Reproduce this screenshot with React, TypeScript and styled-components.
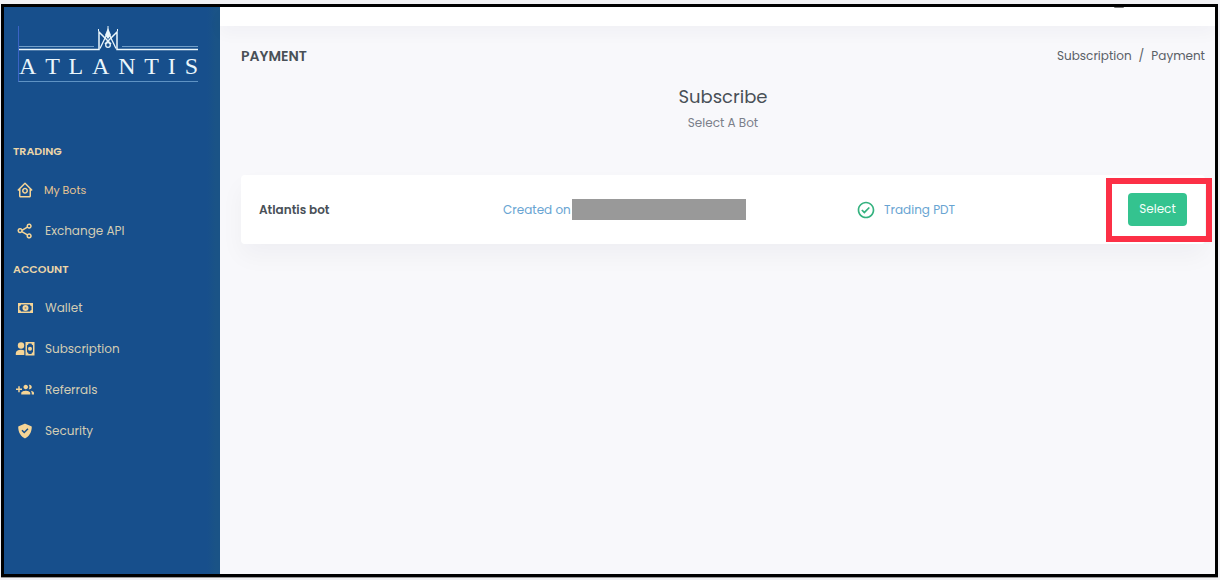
import React from 'react';
import styled, { createGlobalStyle } from 'styled-components';
import { BiCheckCircle, BiHomeCircle, BiShareAlt, BiSolidCheckShield } from 'react-icons/bi';

const GlobalStyle = createGlobalStyle`
  * { box-sizing: border-box; }
  body {
    margin: 0;
    background: #f1f1f4;
    font-family: Poppins, Inter, "Open Sans", sans-serif;
    font-size: 12px;
    line-height: 20px;
    color: #495057;
  }
  h1, h2, h3, p, ul, ol { margin: 0; padding: 0; font-weight: 400; }
  ul, ol { list-style: none; }
  a { color: inherit; text-decoration: none; }
`;

const Page = styled.div`
  min-height: 100vh;
  padding: 4px 2px 3px 1px;
  display: flex;
`;

const Frame = styled.div`
  flex: 1;
  display: flex;
  border: 3px solid #000;
  background: #f8f8fb;
  box-shadow: 0 1px 0 #999;
`;

const Sidebar = styled.aside`
  flex: 0 0 216px;
  background: linear-gradient(90deg, #174f8c 94%, #1a5386 98%);
`;

const Brand = styled.a`
  display: block;
  height: 126px;
  padding: 19px 22px 0 14px;
  color: #eaf6fb;
`;

const BrandMark = styled.svg`
  display: block;
  width: 180px;
  height: 26px;
`;

const Wordmark = styled.span`
  display: flex;
  justify-content: space-between;
  width: 180px;
  height: 30px;
  border-left: 1px solid #3a63c4;
  border-bottom: 1px solid #5f93c4;
  font: 24px/28px "Liberation Serif", serif;
`;

const MenuTitle = styled.h3`
  height: 36px;
  padding-left: 9px;
  font-size: 11px;
  line-height: 36px;
  font-weight: 600;
  color: #ecd6a8;
`;

const MenuLink = styled.a<{ $small?: boolean }>`
  display: flex;
  align-items: center;
  gap: ${(p) => (p.$small ? 9 : 10)}px;
  height: 41px;
  padding-left: 11px;
  font-size: ${(p) => (p.$small ? 11 : 12)}px;
  color: ${(p) => (p.$small ? '#e8c592' : '#d3cdb4')};

  svg {
    width: 20px;
    height: 18px;
    color: #f6d596;
  }
`;

const Main = styled.main`
  flex: 1;
  min-width: 0;
`;

const TopBar = styled.header`
  display: flex;
  justify-content: flex-end;
  height: 19px;
  padding-right: 91px;
  background: #fff;
  box-shadow: 0 8px 16px rgba(18, 38, 63, 0.03);
`;

const Avatar = styled.span`
  width: 10px;
  height: 1px;
  border-radius: 0 0 5px 5px;
  background: #777;
`;

const Content = styled.div`
  padding: 20px 10px 20px 21px;
`;

const TitleRow = styled.div`
  display: flex;
  align-items: center;
  justify-content: space-between;
`;

const PageTitle = styled.h1`
  font-size: 14px;
  font-weight: 600;
`;

const Breadcrumb = styled.ol`
  display: flex;
  gap: 7px;
  color: #5a6067;
`;

const Intro = styled.div`
  padding: 19px 0 42px;
  text-align: center;
`;

const IntroTitle = styled.h2`
  font-size: 18px;
  line-height: 24px;
`;

const IntroText = styled.p`
  padding-top: 4px;
  color: #7b7f8a;
`;

const BotCard = styled.article`
  display: grid;
  grid-template-columns: 244fr 353fr 272fr auto;
  align-items: center;
  height: 69px;
  padding: 0 18px;
  border-radius: 4px;
  background: #fff;
  box-shadow: 0 12px 24px rgba(18, 38, 63, 0.04);
`;

const BotName = styled.h3`
  font-size: 12px;
  font-weight: 600;
`;

const BotInfo = styled.div<{ $gap: number }>`
  display: flex;
  align-items: center;
  gap: ${(p) => p.$gap}px;
  color: #68a4d2;

  svg { color: #34b27f; }
`;

const Redacted = styled.span`
  width: 174px;
  height: 21px;
  background: #999;
`;

const Highlight = styled.div`
  display: flex;
  margin: 0 -25px 0 -22px;
  padding: 9px 19px 10px 16px;
  border: 6px solid #fc3046;
`;

const SelectButton = styled.button`
  width: 59px;
  height: 33px;
  padding: 0;
  border: 0;
  border-radius: 4px;
  background: #34c38f;
  color: #f4fffa;
  font: inherit;
`;

const BanknoteIcon = () => (
  <svg viewBox="0 0 20 18" fill="currentColor" aria-hidden="true">
    <path fillRule="evenodd" d="M3 4h15v10H3zM4.500 7v4q1.500 0 1.500 1.500h9q0-1.500 1.500-1.500V7Q15 7 15 5.500H6Q6 7 4.500 7z" />
    <circle cx="10.500" cy="9" r="3" />
    <circle cx="10.500" cy="9" r="1" fill="#8c9391" />
  </svg>
);

const SubscriberIcon = () => (
  <svg viewBox="0 0 20 18" fill="currentColor" aria-hidden="true">
    <circle cx="6" cy="5.500" r="3.200" />
    <path d="M.8 15v-1.500c0-2.500 2-3.700 5.200-3.700 1.300 0 2.400.2 3.300.7V15z" />
    <path fillRule="evenodd" d="M10.500 2h9v13.500h-9zM13.500 3.500q0 1.700-1.500 1.700v7q1.500 0 1.500 1.700h3q0-1.700 1.500-1.700v-7q-1.500 0-1.500-1.700z" />
    <circle cx="15" cy="8.700" r="2" />
  </svg>
);

const GroupAddIcon = () => (
  <svg viewBox="0 0 24 24" fill="currentColor" aria-hidden="true">
    <path d="M8 10H5V7H3v3H0v2h3v3h2v-3h3v-2zm10 1c1.660 0 2.990-1.340 2.990-3S19.660 5 18 5c-.32 0-.63.05-.91.14.57.81.9 1.790.9 2.860s-.34 2.040-.9 2.860c.28.09.59.14.91.14zm-5 0c1.660 0 2.990-1.340 2.990-3S14.660 5 13 5c-1.660 0-3 1.340-3 3s1.340 3 3 3zm6.620 2.160c.83.73 1.380 1.660 1.380 2.840v2h3v-2c0-1.540-2.370-2.490-4.380-2.840zM13 13c-2 0-6 1-6 3v2h12v-2c0-2-4-3-6-3z" />
  </svg>
);

const CrownMark = () => (
  <BrandMark viewBox="0 0 180 26" fill="none" stroke="#eaf6fb" aria-hidden="true">
    <path d="M.5 0v26" stroke="#3a63c4" />
    <path d="M1 20.500h75M104 20.500h76" stroke="#739fc8" />
    <path d="M1 23.500h80V6l12 12M180 23.500H99V6L87 18" strokeWidth="1.500" />
    <path d="M82 22.500 90 6l8 16.500" strokeWidth="1.300" />
    <circle cx="90" cy="19" r="2.300" strokeWidth="1.300" />
    <path d="M90 0v4M80.500 3v2M99.500 3v2" />
    <path d="m90 2 3 7-3 4-3-4z" fill="#eaf6fb" stroke="none" />
  </BrandMark>
);

const trading = [
  { label: 'My Bots', icon: <BiHomeCircle />, small: true },
  { label: 'Exchange API', icon: <BiShareAlt /> },
];

const account = [
  { label: 'Wallet', icon: <BanknoteIcon /> },
  { label: 'Subscription', icon: <SubscriberIcon /> },
  { label: 'Referrals', icon: <GroupAddIcon /> },
  { label: 'Security', icon: <BiSolidCheckShield /> },
];

type Item = { label: string; icon: React.ReactNode; small?: boolean };

const Menu = ({ title, items }: { title: string; items: Item[] }) => (
  <section>
    <MenuTitle>{title}</MenuTitle>
    <ul>
      {items.map((item) => (
        <li key={item.label}>
          <MenuLink href="#" $small={item.small}>
            {item.icon}
            {item.label}
          </MenuLink>
        </li>
      ))}
    </ul>
  </section>
);

export default function App() {
  return (
    <Page>
      <GlobalStyle />
      <Frame>
        <Sidebar>
          <Brand href="#" aria-label="Atlantis">
            <CrownMark />
            <Wordmark>
              {'ATLANTIS'.split('').map((letter, i) => (
                <span key={i}>{letter}</span>
              ))}
            </Wordmark>
          </Brand>
          <nav>
            <Menu title="TRADING" items={trading} />
            <Menu title="ACCOUNT" items={account} />
          </nav>
        </Sidebar>
        <Main>
          <TopBar>
            <Avatar />
          </TopBar>
          <Content>
            <TitleRow>
              <PageTitle>PAYMENT</PageTitle>
              <Breadcrumb>
                <li><a href="#">Subscription</a></li>
                <li aria-hidden="true">/</li>
                <li>Payment</li>
              </Breadcrumb>
            </TitleRow>
            <Intro>
              <IntroTitle>Subscribe</IntroTitle>
              <IntroText>Select A Bot</IntroText>
            </Intro>
            <BotCard>
              <BotName>Atlantis bot</BotName>
              <BotInfo $gap={1}>
                Created on
                <Redacted />
              </BotInfo>
              <BotInfo $gap={8}>
                <BiCheckCircle size={20} />
                Trading PDT
              </BotInfo>
              <Highlight>
                <SelectButton type="button">Select</SelectButton>
              </Highlight>
            </BotCard>
          </Content>
        </Main>
      </Frame>
    </Page>
  );
}
